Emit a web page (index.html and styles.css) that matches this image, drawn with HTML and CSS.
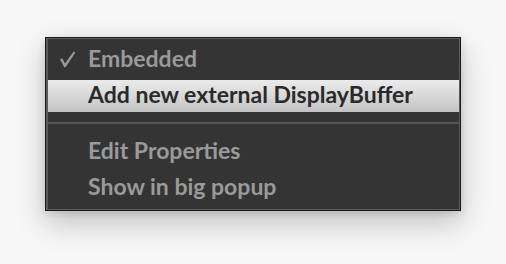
FILE: index.html
```html
<!DOCTYPE html>
<html>
<head>
<meta charset="utf-8">
<link rel="stylesheet" href="styles.css">
</head>
<body>
<div class="menu">
  <div class="menu-inner">
    <div class="item disabled">
      <svg class="check" width="16" height="17" viewBox="0 0 16 17"><path d="M0 8.2 L2.4 7.4 L5 12.6 L13.6 0.6 L15.4 1.6 L5.6 16.2 L4.2 16.2 Z" fill="#989898"/></svg>
      <span>Embedded</span>
    </div>
    <div class="item active"><span>Add new external DisplayBuffer</span></div>
    <div class="sep"></div>
    <div class="item disabled"><span>Edit Properties</span></div>
    <div class="item disabled last"><span>Show in big popup</span></div>
  </div>
</div>
</body>
</html>
```
FILE: styles.css
```css
html, body {
  margin: 0;
  padding: 0;
}
body {
  background: #f7f7f7;
  width: 506px;
  height: 264px;
  overflow: hidden;
  padding: 37px 0 0 45px;
  box-sizing: border-box;
  font-family: Lato, "Open Sans", sans-serif;
}
.menu {
  width: 416px;
  border: 1px solid #1c1c1c;
  box-sizing: border-box;
  box-shadow: 0 12px 28px rgba(0, 0, 0, 0.22), 0 2px 8px rgba(0, 0, 0, 0.12);
}
.menu-inner {
  display: flex;
  flex-direction: column;
  background: #343434;
  border: 1px solid #5a5a5a;
  border-left-width: 2px;
  padding: 5px 0 5px 0;
}
.item {
  position: relative;
  height: 32px;
  line-height: 28px;
  padding-left: 40px;
  margin-bottom: 4px;
  font-size: 23px;
  font-weight: 700;
  white-space: nowrap;
}
.item.last {
  margin-bottom: 0;
}
.disabled {
  color: #9a9a9a;
}
.active {
  color: #2a2a2a;
  background: linear-gradient(to bottom, #ebebeb 0%, #d6d6d6 55%, #c2c2c2 100%);
}
.check {
  position: absolute;
  left: 12px;
  top: 7px;
}
.sep {
  height: 2px;
  background: #555555;
  margin: 6px 0 12px 0;
}
```
